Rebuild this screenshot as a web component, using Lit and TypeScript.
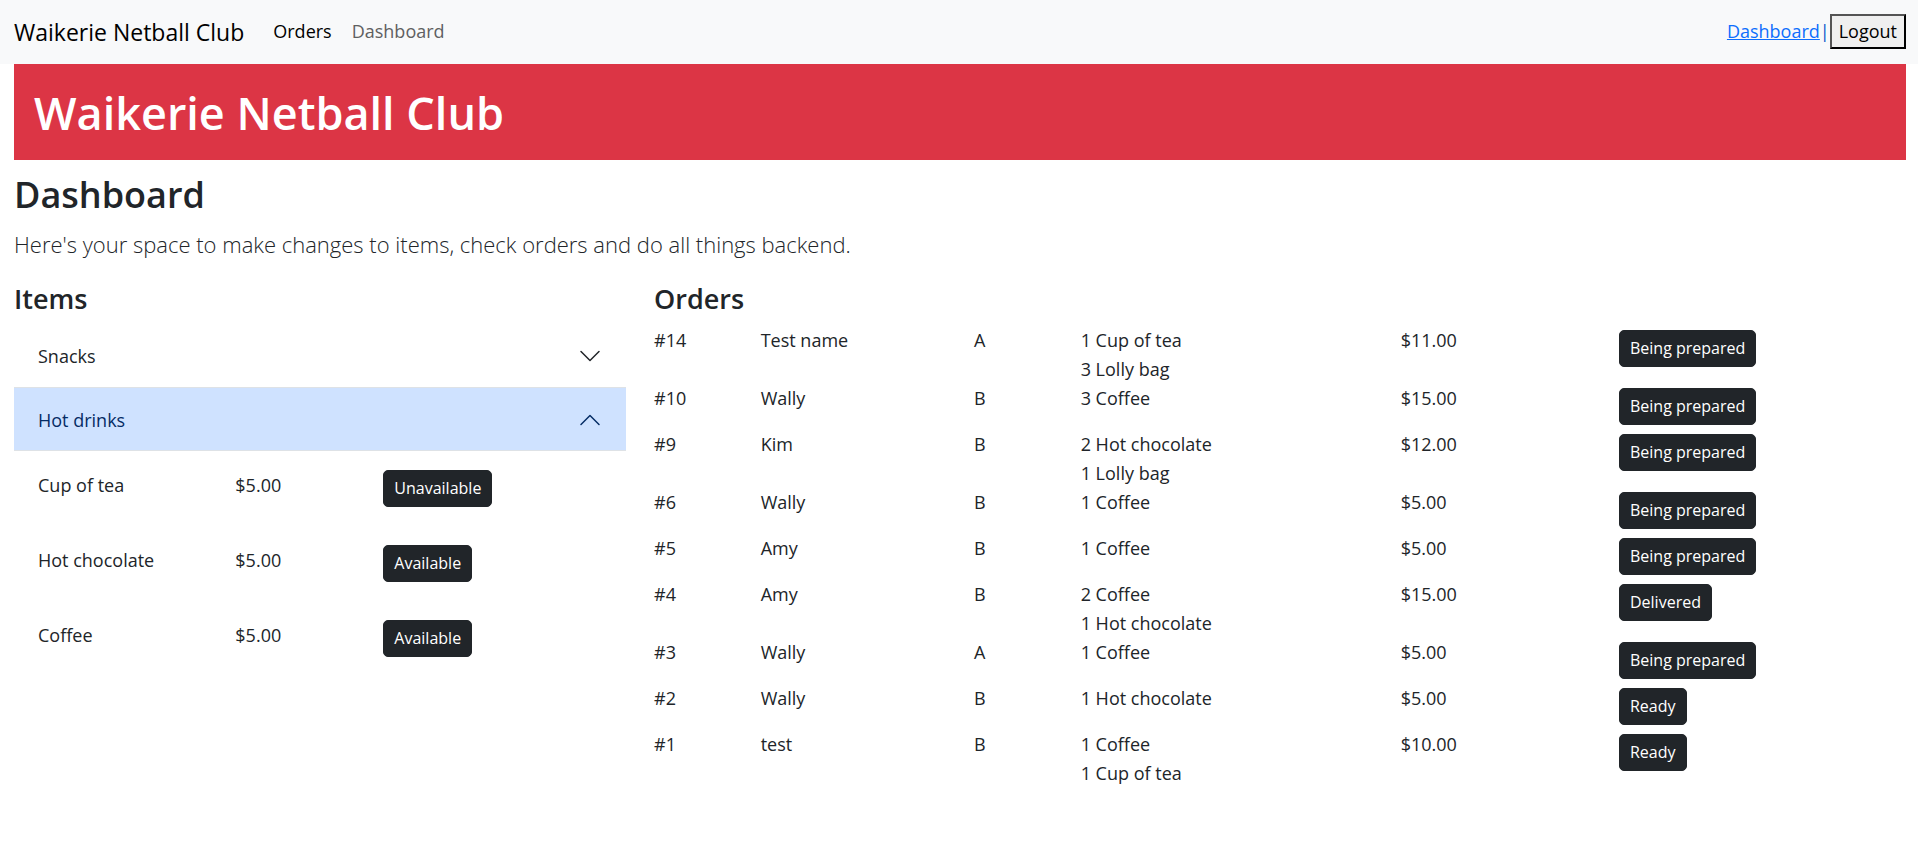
import { LitElement, html, css, svg } from "lit";
import { customElement, property, state } from "lit/decorators.js";

interface Item {
  name: string;
  price: string;
  available: boolean;
}

interface Category {
  name: string;
  items: Item[];
}

interface Order {
  id: number;
  customer: string;
  grade: string;
  lines: string[];
  total: string;
  status: string;
}

const CATEGORIES: Category[] = [
  { name: "Snacks", items: [] },
  {
    name: "Hot drinks",
    items: [
      { name: "Cup of tea", price: "$5.00", available: false },
      { name: "Hot chocolate", price: "$5.00", available: true },
      { name: "Coffee", price: "$5.00", available: true },
    ],
  },
];

const ORDERS: Order[] = [
  { id: 14, customer: "Test name", grade: "A", lines: ["1 Cup of tea", "3 Lolly bag"], total: "$11.00", status: "Being prepared" },
  { id: 10, customer: "Wally", grade: "B", lines: ["3 Coffee"], total: "$15.00", status: "Being prepared" },
  { id: 9, customer: "Kim", grade: "B", lines: ["2 Hot chocolate", "1 Lolly bag"], total: "$12.00", status: "Being prepared" },
  { id: 6, customer: "Wally", grade: "B", lines: ["1 Coffee"], total: "$5.00", status: "Being prepared" },
  { id: 5, customer: "Amy", grade: "B", lines: ["1 Coffee"], total: "$5.00", status: "Being prepared" },
  { id: 4, customer: "Amy", grade: "B", lines: ["2 Coffee", "1 Hot chocolate"], total: "$15.00", status: "Delivered" },
  { id: 3, customer: "Wally", grade: "A", lines: ["1 Coffee"], total: "$5.00", status: "Being prepared" },
  { id: 2, customer: "Wally", grade: "B", lines: ["1 Hot chocolate"], total: "$5.00", status: "Ready" },
  { id: 1, customer: "test", grade: "B", lines: ["1 Coffee", "1 Cup of tea"], total: "$10.00", status: "Ready" },
];

const shared = css`
  * {
    box-sizing: border-box;
  }
  button {
    font: inherit;
    cursor: pointer;
  }
  .action {
    display: block;
    height: 37px;
    padding: 0 10px;
    border: 1px solid #212529;
    border-radius: 5px;
    background: #212529;
    color: #fff;
    font-size: 16px;
    line-height: 25px;
    white-space: nowrap;
  }
`;

@customElement("club-navbar")
export class ClubNavbar extends LitElement {
  static styles = [
    shared,
    css`
      :host {
        display: block;
        background: #f8f9fa;
      }
      .bar {
        display: flex;
        align-items: center;
        min-height: 64px;
        padding: 0 12px 2px 14px;
      }
      .brand {
        margin-right: 19px;
        padding-top: 2px;
        color: #000;
        font-size: 23px;
        line-height: 36px;
        text-decoration: none;
      }
      .links {
        display: flex;
        margin: 0;
        padding: 0;
        list-style: none;
      }
      .link {
        display: block;
        padding: 0 10px;
        color: #5f6061;
        text-decoration: none;
      }
      .link.active {
        color: #000;
      }
      .account {
        display: flex;
        align-items: center;
        margin-left: auto;
        color: #0a58ca;
      }
      .account a {
        color: #0d6efd;
        text-decoration-thickness: 1px;
      }
      .logout {
        height: 35px;
        padding: 0 7px;
        border: 2px outset #000;
        background: #efefef;
        color: #000;
        line-height: 29px;
      }
    `,
  ];

  render() {
    return html`
      <nav class="bar" aria-label="Main">
        <a class="brand" href="#">Waikerie Netball Club</a>
        <ul class="links">
          <li><a class="link active" href="#orders" aria-current="page">Orders</a></li>
          <li><a class="link" href="#dashboard">Dashboard</a></li>
        </ul>
        <div class="account">
          <a href="#dashboard">Dashboard</a><span>|</span>
          <button class="logout" type="button">Logout</button>
        </div>
      </nav>
    `;
  }
}

@customElement("item-accordion")
export class ItemAccordion extends LitElement {
  static styles = [
    shared,
    css`
      :host {
        display: block;
      }
      .heading {
        margin: 0;
        font: inherit;
      }
      .toggle {
        display: flex;
        align-items: center;
        justify-content: space-between;
        width: 100%;
        min-height: 64px;
        padding: 2px 24px 0;
        border: 0;
        background: #fff;
        color: #212529;
        text-align: left;
      }
      .toggle.open {
        background: #cfe2ff;
        color: #052c65;
        box-shadow: inset 0 -1px 0 #dee2e6, inset 0 1px 0 #dee2e6;
      }
      .chevron {
        width: 24px;
        height: 24px;
        fill: currentColor;
      }
      .open .chevron {
        transform: rotate(180deg);
      }
      .row {
        display: grid;
        grid-template-columns: repeat(12, minmax(0, 1fr));
        column-gap: 28px;
        align-items: start;
        padding: 19px 24px;
      }
      .name {
        grid-column: span 4;
      }
      .price {
        grid-column: span 3;
      }
      .name,
      .price {
        padding-top: 1px;
      }
      .state {
        grid-column: span 5;
      }
    `,
  ];

  @property({ attribute: false }) categories: Category[] = [];
  @state() private openName = "Hot drinks";

  private toggle(name: string) {
    this.openName = this.openName === name ? "" : name;
  }

  render() {
    return this.categories.map((category) => {
      const open = category.name === this.openName;
      return html`
        <h4 class="heading">
          <button
            class="toggle ${open ? "open" : ""}"
            type="button"
            aria-expanded=${open ? "true" : "false"}
            @click=${() => this.toggle(category.name)}
          >
            <span>${category.name}</span>
            <svg class="chevron" viewBox="0 0 16 16" aria-hidden="true">
              ${svg`<path fill-rule="evenodd" d="M1.646 4.646a.5.5 0 0 1 .708 0L8 10.293l5.646-5.647a.5.5 0 0 1 .708.708l-6 6a.5.5 0 0 1-.708 0l-6-6a.5.5 0 0 1 0-.708z"/>`}
            </svg>
          </button>
        </h4>
        ${open
          ? category.items.map(
              (item) => html`
                <div class="row">
                  <div class="name">${item.name}</div>
                  <div class="price">${item.price}</div>
                  <div class="state">
                    <button class="action" type="button">${item.available ? "Available" : "Unavailable"}</button>
                  </div>
                </div>
              `
            )
          : null}
      `;
    });
  }
}

@customElement("order-list")
export class OrderList extends LitElement {
  static styles = [
    shared,
    css`
      :host {
        display: block;
        padding-top: 3px;
      }
      .orders,
      .orders tbody {
        display: block;
      }
      .order {
        display: grid;
        grid-template-columns: repeat(12, minmax(0, 1fr));
        column-gap: 28px;
        align-items: start;
      }
      .order td {
        padding: 0;
        white-space: nowrap;
      }
      .wide {
        grid-column: span 2;
      }
      .wider {
        grid-column: span 3;
      }
      .action {
        margin: 4px 5px 5px;
      }
    `,
  ];

  @property({ attribute: false }) orders: Order[] = [];

  render() {
    return html`
      <table class="orders" aria-label="Orders">
        <tbody>
          ${this.orders.map(
            (order) => html`
              <tr class="order">
                <td>#${order.id}</td>
                <td class="wide">${order.customer}</td>
                <td>${order.grade}</td>
                <td class="wider">${order.lines.map((line) => html`<div>${line}</div>`)}</td>
                <td class="wide">${order.total}</td>
                <td class="wider"><button class="action" type="button">${order.status}</button></td>
              </tr>
            `
          )}
        </tbody>
      </table>
    `;
  }
}

@customElement("app-root")
export class AppRoot extends LitElement {
  static styles = [
    shared,
    css`
      :host {
        display: block;
        min-height: 100vh;
        background: #fff;
        color: #212529;
        font-family: "Open Sans", "Noto Sans", sans-serif;
        font-size: 18px;
        font-weight: 400;
        line-height: 29px;
      }
      .content {
        padding: 0 12px 0 14px;
      }
      h1,
      h2,
      h3,
      p {
        margin: 0;
      }
      .banner {
        padding: 20px 20px 18px;
        background: #dc3545;
        color: #fff;
        font-size: 45px;
        font-weight: 600;
        line-height: 58px;
      }
      .title {
        margin-top: 12px;
        font-size: 36px;
        font-weight: 600;
        line-height: 46px;
      }
      .lead {
        margin: 8px 0 19px;
        font-size: 22px;
        font-weight: 300;
        line-height: 36px;
      }
      .columns {
        display: grid;
        grid-template-columns: repeat(12, minmax(0, 1fr));
        column-gap: 28px;
        align-items: start;
      }
      .items {
        grid-column: span 4;
      }
      .orders {
        grid-column: span 8;
      }
      .subtitle {
        margin-bottom: 7px;
        font-size: 27px;
        font-weight: 600;
        line-height: 35px;
      }
    `,
  ];

  render() {
    return html`
      <club-navbar></club-navbar>
      <main class="content">
        <h1 class="banner">Waikerie Netball Club</h1>
        <h2 class="title">Dashboard</h2>
        <p class="lead">Here's your space to make changes to items, check orders and do all things backend.</p>
        <div class="columns">
          <section class="items">
            <h3 class="subtitle">Items</h3>
            <item-accordion .categories=${CATEGORIES}></item-accordion>
          </section>
          <section class="orders">
            <h3 class="subtitle">Orders</h3>
            <order-list .orders=${ORDERS}></order-list>
          </section>
        </div>
      </main>
    `;
  }
}
